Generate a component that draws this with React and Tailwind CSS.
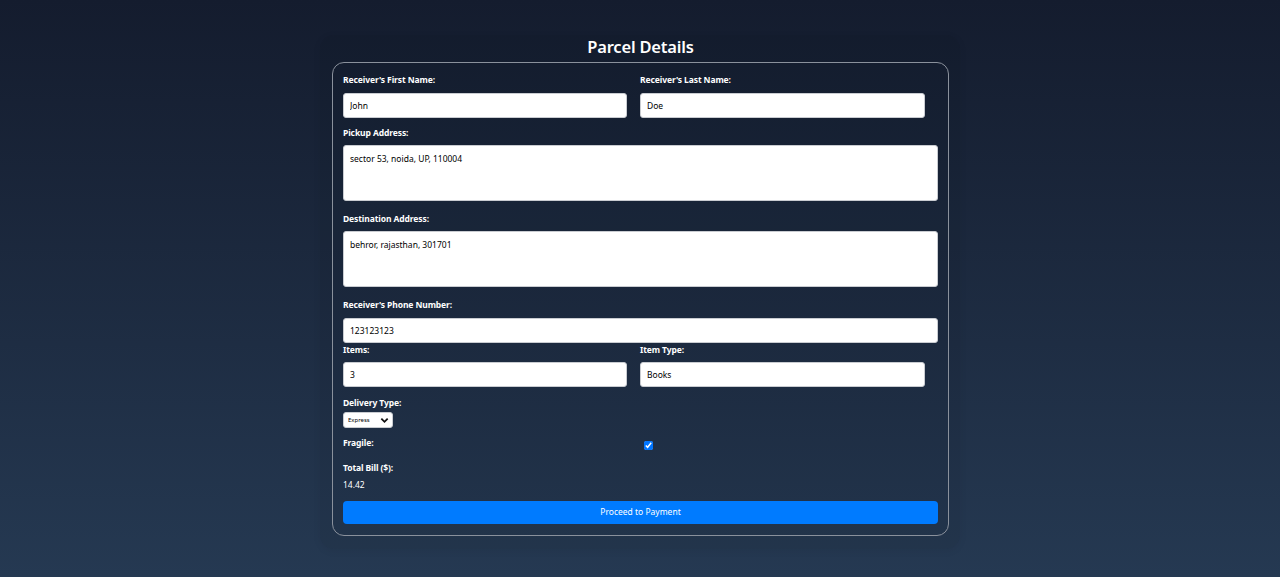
import React, { useState } from "react";

const Label = ({ children, className = "" }) => (
  <label className={`block text-[8.5px] leading-[12px] font-bold tracking-[-0.1px] text-white ${className}`}>
    {children}
  </label>
);

const inputCls =
  "block h-[25px] rounded-[3px] border border-[#c9ccd1] bg-white px-[6px] text-[8.5px] text-black outline-none";

const App = () => {
  const [form, setForm] = useState({
    firstName: "John",
    lastName: "Doe",
    pickup: "sector 53, noida, UP, 110004",
    destination: "behror, rajasthan, 301701",
    phone: "123123123",
    items: "3",
    itemType: "Books",
    delivery: "Express",
    fragile: true,
  });

  const set = (k) => (e) => setForm({ ...form, [k]: e.target.value });

  return (
    <div
      className="min-h-[577px] w-full bg-gradient-to-b from-[#141c2e] to-[#253952]"
      style={{ fontFamily: '"Noto Sans", "Open Sans", sans-serif' }}
    >
      <div className="mx-auto w-[640px] pt-[35px]">
        <div className="rounded-[14px] bg-black/[0.05] pl-[12px] pr-[11px] pb-[13px] shadow-[0_2px_8px_rgba(0,0,0,0.06)]">
          <h2 className="text-center text-[16.5px] leading-[24px] font-semibold tracking-[-0.2px] text-white mb-[3px]">
            Parcel Details
          </h2>

          <form
            onSubmit={(e) => e.preventDefault()}
            className="rounded-[12px] border border-[#8a919c] px-[10px] pt-[11px] pb-[11px]"
          >
            {/* names */}
            <div className="flex gap-[13px]">
              <div className="w-[284px]">
                <Label>Receiver's First Name:</Label>
                <input className={`${inputCls} mt-[7px] w-[284px]`} value={form.firstName} onChange={set("firstName")} />
              </div>
              <div className="w-[285px]">
                <Label>Receiver's Last Name:</Label>
                <input className={`${inputCls} mt-[7px] w-[285px]`} value={form.lastName} onChange={set("lastName")} />
              </div>
            </div>

            {/* pickup */}
            <Label className="mt-[9px]">Pickup Address:</Label>
            <textarea
              className="mt-[6px] block h-[56px] w-full resize-none rounded-[3px] border border-[#c9ccd1] bg-white px-[6px] py-[7px] text-[8.5px] leading-[12px] text-black outline-none"
              value={form.pickup}
              onChange={set("pickup")}
            />

            {/* destination */}
            <Label className="mt-[12px]">Destination Address:</Label>
            <textarea
              className="mt-[6px] block h-[56px] w-full resize-none rounded-[3px] border border-[#c9ccd1] bg-white px-[6px] py-[7px] text-[8.5px] leading-[12px] text-black outline-none"
              value={form.destination}
              onChange={set("destination")}
            />

            {/* phone */}
            <Label className="mt-[12px]">Receiver's Phone Number:</Label>
            <input className={`${inputCls} mt-[7px] w-full`} value={form.phone} onChange={set("phone")} />

            {/* items */}
            <div className="mt-[1px] flex gap-[13px]">
              <div className="w-[284px]">
                <Label>Items:</Label>
                <input className={`${inputCls} mt-[6px] w-[284px]`} value={form.items} onChange={set("items")} />
              </div>
              <div className="w-[285px]">
                <Label>Item Type:</Label>
                <input className={`${inputCls} mt-[6px] w-[285px]`} value={form.itemType} onChange={set("itemType")} />
              </div>
            </div>

            {/* delivery */}
            <Label className="mt-[10px]">Delivery Type:</Label>
            <div className="relative mt-[3px] h-[16px] w-[50px]">
              <select
                className="block h-[16px] w-[50px] appearance-none rounded-[3px] border border-[#c9ccd1] bg-white pl-[4px] text-[6px] text-black outline-none"
                value={form.delivery}
                onChange={set("delivery")}
              >
                <option>Express</option>
                <option>Standard</option>
              </select>
              <svg
                className="pointer-events-none absolute right-[4px] top-[4px]"
                width="9"
                height="8"
                viewBox="0 0 10 8"
                fill="none"
                stroke="#111"
                strokeWidth="2"
              >
                <path d="M1.5 2.5 L5 6 L8.5 2.5" />
              </svg>
            </div>

            {/* fragile */}
            <div className="mt-[9px] flex gap-[13px]">
              <div className="w-[284px]">
                <Label>Fragile:</Label>
              </div>
              <div className="w-[285px] pl-[4px] pt-[4px]">
                <input
                  type="checkbox"
                  checked={form.fragile}
                  onChange={(e) => setForm({ ...form, fragile: e.target.checked })}
                  className="m-0 block h-[9px] w-[9px] accent-[#0075ff]"
                />
              </div>
            </div>

            {/* total */}
            <Label className="mt-[12px]">Total Bill ($):</Label>
            <p className="mt-[5px] text-[8.5px] leading-[12px] text-white">14.42</p>

            <button
              type="submit"
              className="mt-[10px] block h-[23px] w-full rounded-[4px] bg-[#007bff] text-[8.5px] text-white"
            >
              Proceed to Payment
            </button>
          </form>
        </div>
      </div>
    </div>
  );
};

export default App;
